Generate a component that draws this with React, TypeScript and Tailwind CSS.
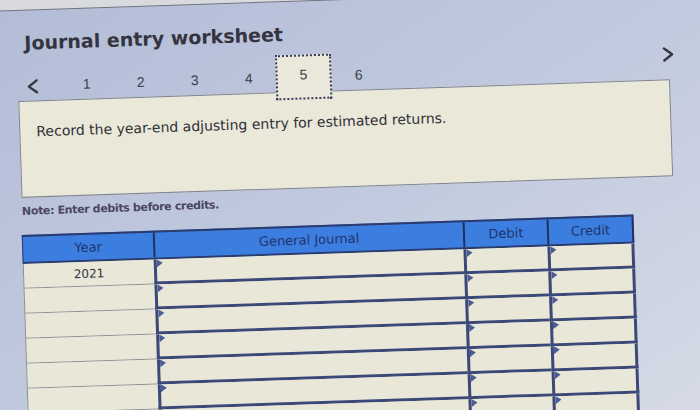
const steps = [1, 2, 3, 4, 5, 6];
const active = 5;

function Flag() {
  return (
    <svg className="absolute left-0 top-0" width="6" height="8" viewBox="0 0 6 8">
      <path d="M0 0 L6 3.5 L0 8 Z" fill="#4b5c95" />
    </svg>
  );
}

function Chevron({ dir, className }: { dir: "left" | "right"; className?: string }) {
  return (
    <svg className={className} width="14" height="16" viewBox="0 0 14 16">
      <polyline
        points={dir === "left" ? "11,2 3,8 11,14" : "3,2 11,8 3,14"}
        fill="none"
        stroke="#33343d"
        strokeWidth="2.3"
        strokeLinecap="round"
        strokeLinejoin="round"
      />
    </svg>
  );
}

function EntryRow({ year }: { year?: string }) {
  return (
    <>
      <div className="flex h-[25px] items-center justify-center border-b border-l border-[#8d8e92] bg-[#e9e8d8] text-[12px] text-[#34343a]">
        {year}
      </div>
      <div className="relative h-[25px] border-b-[3px] border-l-[3px] border-[#3c4878] bg-[#e9e8d8]">
        <Flag />
      </div>
      <div className="relative h-[25px] border-b-[3px] border-l-[3px] border-[#3c4878] bg-[#e9e8d8]">
        <Flag />
      </div>
      <div className="relative h-[25px] border-x-[3px] border-b-[3px] border-[#3c4878] bg-[#e9e8d8]">
        <Flag />
      </div>
    </>
  );
}

export default function App() {
  return (
    <div className="h-[410px] w-[700px] overflow-hidden bg-[#d9dade] font-['DejaVu_Sans',sans-serif]">
      {/* the photo is tilted a little, so the sheet is rotated as one piece */}
      <div className="ml-[-30px] mt-[-1px] h-[460px] w-[770px] origin-[380px_208px] rotate-[-1.9deg] border-t border-[#6d7180] bg-linear-to-br from-[#b2bcd6] via-[#c2cadf] to-[#d9dde7] pl-[30px] pt-[1px]">
        <div className="w-[700px]">
          <div className="pl-[30px] pt-[22px] text-[19px] font-bold leading-[19px] text-[#34343f]">
            Journal entry worksheet
          </div>

          <div className="relative z-10 mt-[11px] flex h-[45px] items-center pl-[30px] pr-[20px]">
            <Chevron dir="left" />
            <div className="ml-[20px] flex h-full">
              {steps.map((n) =>
                n === active ? (
                  <div
                    key={n}
                    className="flex h-[45px] w-[56px] items-center justify-center border-2 border-dotted border-[#363b5a] bg-[#e9e8da] pb-[4px] font-['Liberation_Sans',sans-serif] text-[14px] text-[#3a3c46]"
                  >
                    {n}
                  </div>
                ) : (
                  <div
                    key={n}
                    className="flex h-[45px] w-[54px] items-center justify-center font-['Liberation_Sans',sans-serif] text-[14px] text-[#3c3f4a]"
                  >
                    {n}
                  </div>
                )
              )}
            </div>
            <Chevron dir="right" className="ml-auto mb-[22px]" />
          </div>

          <div className="ml-[22px] mt-[-8px] h-[97px] w-[652px] border border-[#7f8392] bg-[#e9e8d9] pl-[16px] pt-[22px] text-[14px] leading-[16px] text-[#2f2f36]">
            Record the year-end adjusting entry for estimated returns.
          </div>

          <div className="ml-[22px] mt-[6px] text-[11px] font-semibold leading-[16px] tracking-[-0.35px] text-[#4a4660]">
            Note: Enter debits before credits.
          </div>

          <div className="ml-[21px] mt-[15px] w-[612px]">
            <div className="grid h-[29px] grid-cols-[131px_310px_84px_87px] border-y-2 border-[#2c3a6c] bg-[#3c7ee0] text-[13px] text-[#1f336c]">
              <div className="flex items-center justify-center border-l border-[#2c3a6c]">Year</div>
              <div className="flex items-center justify-center border-l-2 border-[#22305e]">General Journal</div>
              <div className="flex items-center justify-center border-l-2 border-[#22305e]">Debit</div>
              <div className="flex items-center justify-center border-x-2 border-[#22305e]">Credit</div>
            </div>
            <div className="grid grid-cols-[131px_310px_84px_87px]">
              <EntryRow year="2021" />
              <EntryRow />
              <EntryRow />
              <EntryRow />
              <EntryRow />
              <EntryRow />
              <EntryRow />
            </div>
          </div>
        </div>
      </div>
    </div>
  );
}
